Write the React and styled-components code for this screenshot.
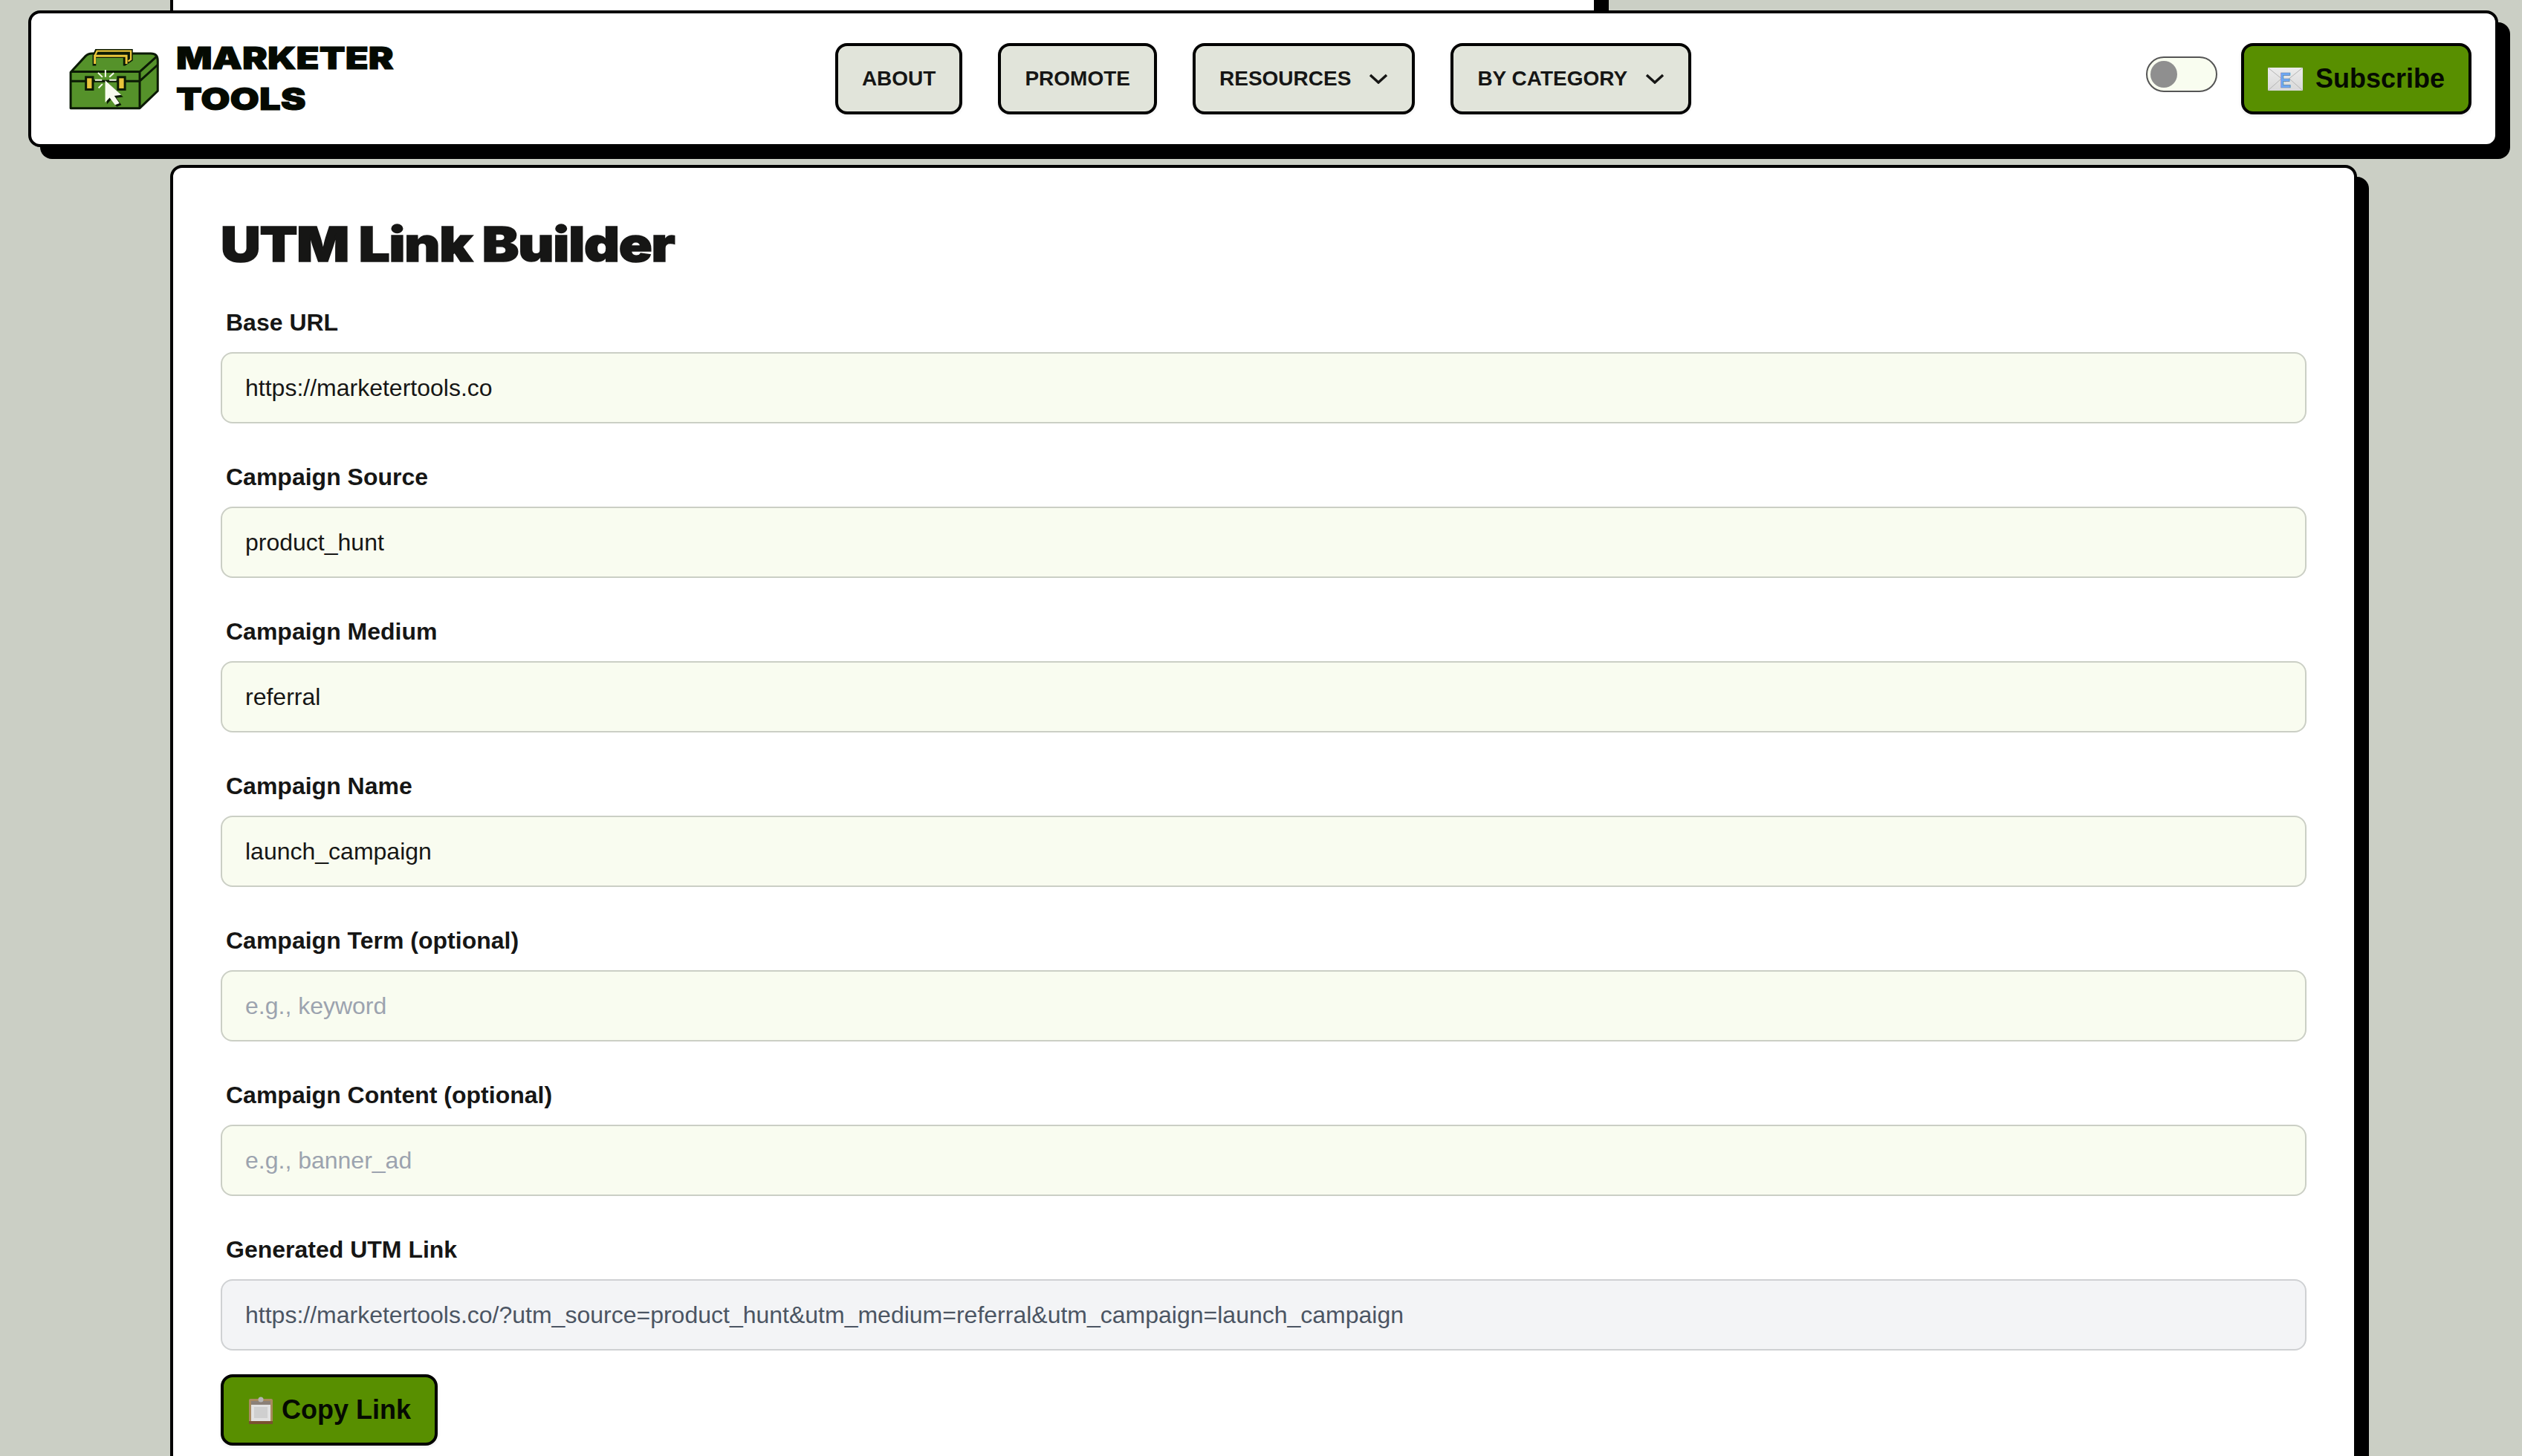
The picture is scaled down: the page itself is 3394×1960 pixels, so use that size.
import React from "react";
import styled, { createGlobalStyle } from "styled-components";

const GlobalStyle = createGlobalStyle`
  html, body {
    margin: 0;
    height: 100%;
    overflow: hidden;
    background: #cbcfc5;
  }
  * {
    box-sizing: border-box;
  }
`;

const Page = styled.div`
  height: 1960px;
  overflow: hidden;
  font-family: "Liberation Sans", Arial, sans-serif;
  color: #161615;
`;

const PrevCardEdge = styled.div`
  width: 1920px;
  height: 14px;
  margin-left: 229px;
  background: #fff;
  border-left: 4px solid #000;
  border-right: 4px solid #000;
  box-shadow: 16px 0 0 #000;
`;

const Header = styled.header`
  display: grid;
  grid-template-columns: 1fr auto 1fr;
  align-items: center;
  height: 184px;
  margin: 0 32px 0 38px;
  padding: 0 32px;
  background: #fff;
  border: 4px solid #000;
  border-radius: 16px;
  box-shadow: 16px 16px 0 #000;
`;

const Brand = styled.a`
  display: flex;
  align-items: center;
  gap: 22px;
  margin-left: 19px;
  color: #050a02;
  text-decoration: none;
`;

const BrandName = styled.span`
  display: block;
  font-family: Inter, "Liberation Sans", sans-serif;
  font-size: 41px;
  font-weight: 900;
  line-height: 55px;
  -webkit-text-stroke: 1px #050a02;
  transform: scaleX(1.24);
  transform-origin: left center;
`;

const Nav = styled.nav`
  display: flex;
  align-items: center;
  gap: 48px;
`;

const NavButton = styled.button`
  display: flex;
  align-items: center;
  gap: 24px;
  height: 96px;
  padding: 0 32px;
  background: #e1e4da;
  border: 4px solid #000;
  border-radius: 16px;
  box-shadow: 0 2px 4px rgba(0, 0, 0, 0.06);
  color: #161615;
  font-family: inherit;
  font-size: 28px;
  font-weight: 700;
`;

const Actions = styled.div`
  display: flex;
  justify-content: flex-end;
  align-items: center;
  gap: 32px;
`;

const Toggle = styled.div`
  display: flex;
  align-items: center;
  width: 96px;
  height: 48px;
  margin-bottom: 12px;
  padding-left: 4px;
  background: #f9fdf0;
  border: 2.5px solid #555;
  border-radius: 24px;
`;

const Knob = styled.span`
  width: 36px;
  height: 36px;
  border-radius: 50%;
  background: #8f8f8f;
`;

const ActionButton = styled.button`
  display: inline-flex;
  align-items: center;
  gap: ${(p) => p.$gap || 12}px;
  height: 96px;
  padding: 0 32px 0 ${(p) => p.$left || 32}px;
  background: #588f00;
  border: 4px solid #000;
  border-radius: 16px;
  box-shadow: 0 2px 4px rgba(0, 0, 0, 0.08);
  color: #050a02;
  font-family: inherit;
  font-size: 36px;
  font-weight: 700;
`;

const Card = styled.main`
  width: 2943px;
  height: 1900px;
  margin: 24px 0 0 229px;
  padding: 0 64px;
  background: #fff;
  border: 4px solid #000;
  border-radius: 16px;
  box-shadow: 16px 16px 0 #000;
`;

const Title = styled.h1`
  margin: 0;
  padding-top: 71px;
  height: 182px;
  font-family: Inter, "Liberation Sans", sans-serif;
  font-size: 64px;
  font-weight: 900;
  line-height: 64px;
  letter-spacing: -1px;
  color: #161615;
  -webkit-text-stroke: 1.5px #161615;
  transform: scaleX(1.16);
  transform-origin: left center;
`;

const Form = styled.form`
  display: flex;
  flex-direction: column;
`;

const Field = styled.div`
  display: flex;
  flex-direction: column;
  margin-bottom: ${(p) => (p.$last ? 32 : 46)}px;
`;

const Label = styled.label`
  height: 50px;
  margin-bottom: 16px;
  padding: 2px 0 0 7px;
  font-size: 32px;
  font-weight: 700;
  line-height: 48px;
`;

const Input = styled.input`
  width: 100%;
  height: 96px;
  padding: 0 31px;
  background: ${(p) => (p.$generated ? "#f3f4f6" : "#f9fcf0")};
  border: 2px solid ${(p) => (p.$generated ? "#cfd1d3" : "#cbcfc5")};
  border-radius: 16px;
  outline: none;
  color: ${(p) => (p.$generated ? "#4b5563" : "#161615")};
  font-family: inherit;
  font-size: 32px;

  &::placeholder {
    color: #9ca3af;
    opacity: 1;
  }
`;

const fields = [
  { label: "Base URL", value: "https://marketertools.co" },
  { label: "Campaign Source", value: "product_hunt" },
  { label: "Campaign Medium", value: "referral" },
  { label: "Campaign Name", value: "launch_campaign" },
  { label: "Campaign Term (optional)", placeholder: "e.g., keyword" },
  { label: "Campaign Content (optional)", placeholder: "e.g., banner_ad" },
];

const Toolbox = () => (
  <svg width="122" height="83" viewBox="100 115 365 250" aria-hidden="true">
    <path d="M105 358V212L165 147Q176 136 192 136H430Q458 136 458 165V288L385 358Z" fill="#55922a" stroke="#0b1a05" strokeWidth="9" strokeLinejoin="round" />
    <path d="M105 210H385V358M385 210L456 146M385 248L458 182M105 248H385" fill="none" stroke="#0b1a05" strokeWidth="9" />
    <path d="M205 118H357V165L326 186H318V154H208V186H194V143Z" fill="#0b1a05" />
    <path d="M203 178V146H331V178" fill="none" stroke="#e9c53b" strokeWidth="9" />
    <path d="M203 146L212 126H349V160L338 168" fill="none" stroke="#e9c53b" strokeWidth="7" />
    <rect x="167" y="232" width="28" height="50" fill="#e9c53b" stroke="#0b1a05" strokeWidth="9" />
    <rect x="297" y="232" width="28" height="50" fill="#e9c53b" stroke="#0b1a05" strokeWidth="9" />
    <path d="M252 252L318 312L290 316L311 345L292 352L270 322L252 342Z" fill="#0b1a05" />
    <path d="M245 245L310 304L282 308L303 338L285 345L263 315L245 335Z" fill="#f7fbee" />
    <path d="M246 202V232M204 244H232M262 244H290M216 214L234 232M280 215L262 232M218 276L234 260" stroke="#f7fbee" strokeWidth="6" fill="none" />
  </svg>
);

const Chevron = () => (
  <svg width="26" height="14" viewBox="0 0 26 14" aria-hidden="true">
    <path d="M2 2L13 12L24 2" fill="none" stroke="#161615" strokeWidth="3.5" />
  </svg>
);

const EnvelopeSvg = styled.svg`
  overflow: visible;
`;

const EnvelopeEmoji = () => (
  <EnvelopeSvg width="47" height="31" viewBox="0 0 47 31" aria-hidden="true">
    <defs>
      <linearGradient id="envelopeFill" x1="0" y1="0" x2="0" y2="1">
        <stop offset="0" stopColor="#ececec" />
        <stop offset="1" stopColor="#d9d9d9" />
      </linearGradient>
    </defs>
    <rect width="47" height="31" fill="url(#envelopeFill)" />
    <path d="M0 0L23.5 19L47 0M0 31L18 15M47 31L29 15" fill="none" stroke="#b5b5b5" strokeWidth="1" />
    <text
      x="23.5"
      y="27"
      textAnchor="middle"
      fontFamily="Liberation Sans"
      fontWeight="700"
      fontSize="29"
      fill="#6ea8f5"
      stroke="#5f7ea8"
      strokeWidth="0.7"
      transform="translate(23.5 0) scale(0.78 1) translate(-23.5 0)"
    >
      E
    </text>
  </EnvelopeSvg>
);

const ClipboardEmoji = () => (
  <svg width="32" height="37" viewBox="0 0 32 37" aria-hidden="true">
    <rect x="0" y="3" width="32" height="34" rx="2" fill="#a98a5f" />
    <rect x="3" y="7" width="26" height="26" fill="#e2e2e2" />
    <rect x="3" y="6" width="26" height="5" fill="#8b8078" />
    <rect x="7" y="14" width="18" height="15" fill="#cfcfcf" />
    <rect x="0" y="33" width="32" height="4" fill="#7a5230" />
    <circle cx="16" cy="4" r="3.5" fill="#b5b5b5" />
  </svg>
);

const App = () => {
  return (
    <Page>
      <GlobalStyle />
      <PrevCardEdge />
      <Header>
        <Brand href="#">
          <Toolbox />
          <BrandName>
            MARKETER
            <br />
            TOOLS
          </BrandName>
        </Brand>
        <Nav>
          <NavButton>ABOUT</NavButton>
          <NavButton>PROMOTE</NavButton>
          <NavButton>
            RESOURCES
            <Chevron />
          </NavButton>
          <NavButton>
            BY CATEGORY
            <Chevron />
          </NavButton>
        </Nav>
        <Actions>
          <Toggle>
            <Knob />
          </Toggle>
          <ActionButton $gap={17}>
            <EnvelopeEmoji />
            Subscribe
          </ActionButton>
        </Actions>
      </Header>
      <Card>
        <Title>UTM Link Builder</Title>
        <Form>
          {fields.map((f) => (
            <Field key={f.label}>
              <Label>{f.label}</Label>
              <Input readOnly value={f.value} placeholder={f.placeholder} />
            </Field>
          ))}
          <Field $last>
            <Label>Generated UTM Link</Label>
            <Input
              $generated
              readOnly
              value="https://marketertools.co/?utm_source=product_hunt&utm_medium=referral&utm_campaign=launch_campaign"
            />
          </Field>
          <div>
            <ActionButton type="button" $left={34}>
              <ClipboardEmoji />
              Copy Link
            </ActionButton>
          </div>
        </Form>
      </Card>
    </Page>
  );
};

export default App;
